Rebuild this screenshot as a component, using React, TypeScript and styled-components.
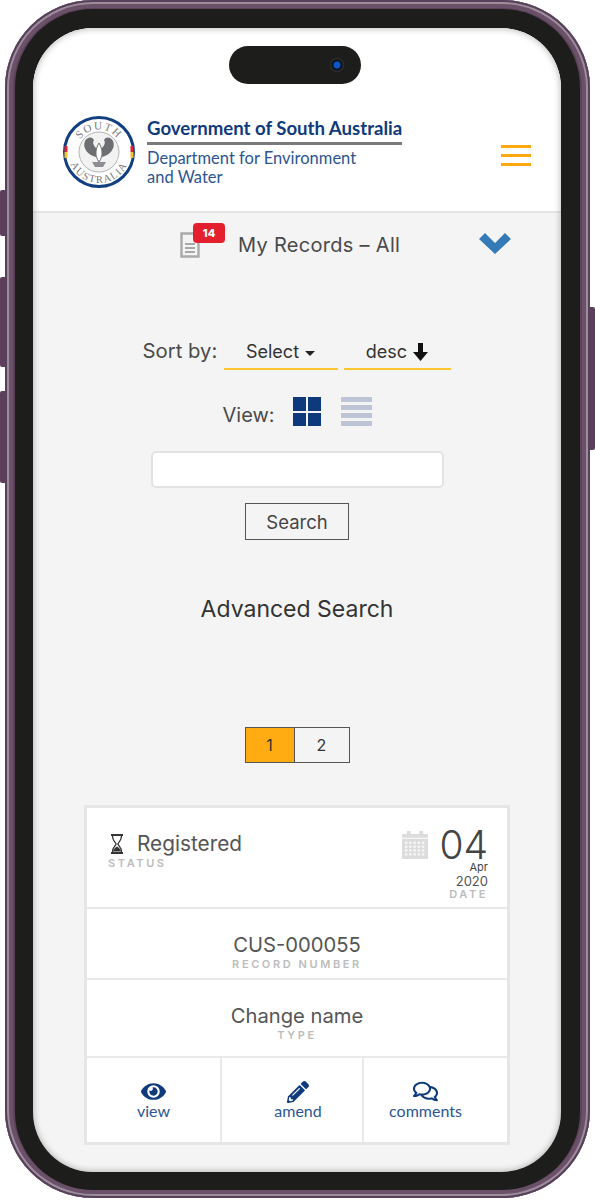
import { createGlobalStyle } from 'styled-components';
import styled from 'styled-components';
import { FaEye, FaPencilAlt, FaRegComments } from 'react-icons/fa';

const GlobalStyle = createGlobalStyle`
  html, body {
    margin: 0;
    padding: 0;
    background: #fff;
  }
  * {
    box-sizing: border-box;
  }
`;

const Page = styled.div`
  width: 595px;
  height: 1200px;
  padding-left: 5px;
  font-family: 'Inter', 'Liberation Sans', sans-serif;
  overflow: hidden;
`;

const Frame = styled.div`
  position: relative;
  width: 585px;
  height: 1198px;
  padding: 9px 10px 8px;
  border-radius: 88px;
  background: #5b4259;
  box-shadow: inset 0 0 0 2px #56405a, inset 0 0 0 4px #9d8d9b, inset 0 0 0 8px #6a5068;
`;

const SideButton = styled.span<{ $side: 'left' | 'right'; $top: number; $height: number }>`
  position: absolute;
  top: ${({ $top }) => $top}px;
  height: ${({ $height }) => $height}px;
  ${({ $side }) => ($side === 'left' ? 'left: -5px;' : 'right: -5px;')}
  width: 5px;
  background: #5c3f5c;
  border-radius: ${({ $side }) => ($side === 'left' ? '2px 0 0 2px' : '0 2px 2px 0')};
`;

const Bezel = styled.div`
  height: 100%;
  padding: 19px 19px 18px 18px;
  border-radius: 78px;
  background: #1d1d1b;
`;

const Screen = styled.div`
  position: relative;
  height: 100%;
  border-radius: 60px;
  overflow: hidden;
  background: #f4f4f4;
  display: flex;
  flex-direction: column;

  &::after {
    content: '';
    position: absolute;
    inset: 0;
    border-radius: 60px;
    box-shadow: inset 0 0 7px rgba(0, 0, 0, 0.32);
    pointer-events: none;
  }
`;

const Island = styled.div`
  position: absolute;
  top: 18px;
  left: 196px;
  width: 132px;
  height: 38px;
  border-radius: 19px;
  background: #1d1d1b;
`;

const Camera = styled.span`
  position: absolute;
  top: 12px;
  right: 17px;
  width: 14px;
  height: 14px;
  border-radius: 50%;
  background: radial-gradient(circle, #0b57c9 0 3px, #10141c 4px 5px, #34363a 7px);
`;

const Header = styled.header`
  height: 185px;
  flex: none;
  background: #fff;
  border-bottom: 2px solid #e6e6e6;
  padding: 87px 30px 0 29px;
  display: flex;
  align-items: flex-start;
`;

const Crest = styled.svg`
  width: 74px;
  height: 74px;
  flex: none;
`;

const Agency = styled.div`
  margin-left: 11px;
  width: 255px;
  font-family: 'Lato', 'Liberation Sans', sans-serif;
  color: #2c5591;
`;

const Government = styled.div`
  font-size: 18.6px;
  line-height: 24px;
  font-weight: 700;
  color: #0f3a7c;
  white-space: nowrap;
  margin-top: 1px;
  padding-bottom: 2px;
  border-bottom: 3px solid #7b7b7d;
`;

const Department = styled.div`
  margin-top: 4px;
  font-size: 16.5px;
  line-height: 19px;
`;

const Burger = styled.div`
  margin-left: auto;
  margin-top: 30px;
  width: 30px;
  display: flex;
  flex-direction: column;
  gap: 6px;
`;

const BurgerLine = styled.span`
  height: 3px;
  background: #ffa90f;
`;

const Content = styled.main`
  flex: 1;
  padding: 0 51px;
  display: flex;
  flex-direction: column;
  align-items: center;
  color: #4a4a4a;
`;

const RecordsBar = styled.div`
  position: relative;
  width: 100%;
  height: 66px;
  display: flex;
  align-items: center;
  padding: 0 0 0 96px;
`;

const RecordIcon = styled.div`
  position: relative;
  align-self: flex-start;
  width: 45px;
  height: 36px;
  margin-top: 10px;
  padding-top: 9px;
`;

const Badge = styled.span`
  position: absolute;
  top: 0;
  left: 13px;
  width: 32px;
  height: 20px;
  border-radius: 4px;
  background: #e5202e;
  color: #fff;
  font-size: 11px;
  font-weight: 800;
  line-height: 20px;
  text-align: center;
`;

const RecordsTitle = styled.span`
  margin-left: 13px;
  margin-top: -3px;
  font-size: 20px;
  letter-spacing: 0.3px;
`;

const Chevron = styled.svg`
  position: absolute;
  top: 20px;
  right: -1px;
  width: 32px;
  height: 21px;
`;

const SortRow = styled.div`
  margin-top: 56px;
  display: flex;
  align-items: flex-start;
  margin-left: -1px;
`;

const SortLabel = styled.span`
  font-size: 20.3px;
  line-height: 24px;
  margin-top: 4px;
  width: 81px;
  white-space: nowrap;
`;

const SortControl = styled.div<{ $width: number }>`
  width: ${({ $width }) => $width}px;
  height: 35px;
  margin-right: 6px;
  border-bottom: 2px solid #fdc731;
  display: flex;
  align-items: center;
  justify-content: center;
  gap: 6px;
  font-size: 18px;
  color: #333;

  &:last-child {
    margin-right: 0;
  }
`;

const Caret = styled.span`
  margin-top: 4px;
  border-left: 5px solid transparent;
  border-right: 5px solid transparent;
  border-top: 5px solid #222;
`;

const ViewRow = styled.div`
  margin-top: 27px;
  display: flex;
  align-items: flex-start;
  height: 30px;
`;

const ViewLabel = styled.span`
  font-size: 20px;
  line-height: 24px;
  width: 70px;
  margin-top: 6px;
`;

const GridIcon = styled.div`
  width: 28px;
  height: 29px;
  display: grid;
  grid-template: 1fr 1fr / 1fr 1fr;
  gap: 2px;
`;

const GridCell = styled.span`
  background: #0e3a7c;
`;

const ListIcon = styled.div`
  margin-left: 20px;
  width: 31px;
  height: 29px;
  display: flex;
  flex-direction: column;
  justify-content: space-between;
`;

const ListBar = styled.span`
  height: 5px;
  background: #bcc4d6;
`;

const SearchInput = styled.input`
  margin-top: 24px;
  width: 293px;
  height: 37px;
  background: #fff;
  border: 2px solid #e3e3e3;
  border-radius: 5px;
  outline: none;
`;

const SearchButton = styled.button`
  margin-top: 15px;
  width: 104px;
  height: 37px;
  background: #f4f4f4;
  border: 1px solid #555;
  color: #444;
  font: inherit;
  font-size: 18.5px;
`;

const AdvancedSearch = styled.div`
  margin-top: 55px;
  font-size: 23px;
  line-height: 28px;
  color: #333;
`;

const Pager = styled.div`
  margin-top: 104px;
  display: flex;
  border: 1px solid #555;
`;

const PageButton = styled.span<{ $active?: boolean }>`
  width: ${({ $active }) => ($active ? 49 : 54)}px;
  height: 34px;
  display: flex;
  align-items: center;
  justify-content: center;
  font-size: 16px;
  color: #333;
  background: ${({ $active }) => ($active ? '#ffab12' : 'transparent')};
  border-right: ${({ $active }) => ($active ? '1px solid #555' : 'none')};
`;

const Card = styled.section`
  margin-top: 42px;
  width: 426px;
  border: 3px solid #e6e6e6;
  background: #fff;
`;

const StatusRow = styled.div`
  height: 101px;
  padding: 23px 19px 0 21px;
  display: flex;
  justify-content: space-between;
  border-bottom: 2px solid #e9e9e9;
`;

const StatusValue = styled.div`
  display: flex;
  align-items: center;
  gap: 13px;
  padding-left: 2px;
  font-size: 20.8px;
  line-height: 26px;
  color: #555;
`;

const Caption = styled.div`
  font-size: 11px;
  line-height: 12px;
  font-weight: 600;
  letter-spacing: 2.6px;
  color: #bcbcbc;
`;

const DateBlock = styled.div`
  display: flex;
  flex-direction: column;
  align-items: flex-end;
  margin-top: -3px;
`;

const DateTop = styled.div`
  display: flex;
  align-items: center;
  gap: 11px;
  height: 33px;
`;

const DateDay = styled.span`
  font-size: 39px;
  font-weight: 300;
  line-height: 33px;
  color: #444;
`;

const DateMonth = styled.span`
  font-size: 11px;
  line-height: 13px;
  color: #444;
`;

const DateYear = styled.span`
  font-size: 13px;
  line-height: 14px;
  color: #555;
`;

const InfoRow = styled.div<{ $height: number }>`
  height: ${({ $height }) => $height}px;
  display: flex;
  flex-direction: column;
  align-items: center;
  border-bottom: 2px solid #e9e9e9;
  padding-top: 23px;
`;

const InfoValue = styled.div`
  font-size: 20.2px;
  line-height: 26px;
  color: #555;
`;

const Actions = styled.div`
  display: grid;
  grid-template-columns: 135px 142px 1fr;
  height: 84px;
`;

const Action = styled.div<{ $nudge: number }>`
  display: flex;
  flex-direction: column;
  align-items: center;
  padding-top: 22px;
  padding-left: ${({ $nudge }) => Math.max($nudge, 0)}px;
  padding-right: ${({ $nudge }) => Math.max(-$nudge, 0)}px;
  color: #0f3a7c;
  border-right: 2px solid #e9e9e9;
  font-family: 'Lato', 'Liberation Sans', sans-serif;

  &:last-child {
    border-right: none;
  }
`;

const ActionIcon = styled.div`
  height: 23px;
  font-size: 23px;
  line-height: 23px;
  display: flex;
  align-items: center;
`;

const ActionLabel = styled.span`
  font-size: 16px;
  line-height: 16px;
  color: #2c5591;
`;

function CrestLogo() {
  return (
    <Crest viewBox="0 0 74 74">
      <defs>
        <path id="arcTop" d="M14.5 37 A22.5 22.5 0 0 1 59.5 37" />
        <path id="arcBottom" d="M6 37 A31 31 0 0 0 68 37" />
      </defs>
      <circle cx="37" cy="37" r="34.5" fill="#fff" stroke="#123f80" strokeWidth="3" />
      <path d="M2.5 31 h3 v6 h-3z" fill="#e5202e" />
      <path d="M2.5 37 h3 v6 h-3z" fill="#f7c22b" />
      <path d="M68.5 31 h3 v6 h-3z" fill="#e5202e" />
      <path d="M68.5 37 h3 v6 h-3z" fill="#f7c22b" />
      <text fontFamily="Liberation Serif, serif" fontSize="11" fill="#77787b" letterSpacing="1.4">
        <textPath href="#arcTop" startOffset="50%" textAnchor="middle">SOUTH</textPath>
      </text>
      <text fontFamily="Liberation Serif, serif" fontSize="10.5" fill="#77787b" letterSpacing="1.4">
        <textPath href="#arcBottom" startOffset="50%" textAnchor="middle">AUSTRALIA</textPath>
      </text>
      <circle cx="37" cy="37" r="20" fill="#f2f2f2" stroke="#b5b5b5" strokeWidth="1" />
      <path d="M34 42 C26 40 20 33 23 26 C25 22 30 21 32 25 C30 28 32 31 35 34z" fill="#6d6e71" />
      <path d="M40 42 C48 40 54 33 51 26 C49 22 44 21 42 25 C44 28 42 31 39 34z" fill="#6d6e71" />
      <path d="M37 28 C40 33 42 40 37 47 C32 40 34 33 37 28z" fill="#fff" stroke="#6d6e71" strokeWidth="1" />
      <path d="M30 47 h14 l-3 5 h-8z" fill="#8d8e91" />
    </Crest>
  );
}

function DocumentIcon() {
  return (
    <svg width="20" height="26" viewBox="0 0 20 26">
      <path d="M1.5 1.5h12l5 5v18h-17z" fill="#f4f4f4" stroke="#a9a9a9" strokeWidth="2.4" />
      <path d="M5 12h10M5 16h10M5 20h10" stroke="#a9a9a9" strokeWidth="1.8" />
    </svg>
  );
}

function HourglassIcon() {
  return (
    <svg width="14" height="20" viewBox="0 0 14 20">
      <path d="M1 0h12v2H1zM1 18h12v2H1z" fill="#333" />
      <path d="M2.5 2c0 5 3 6 3.6 8-.6 2-3.6 3-3.6 8M11.5 2c0 5-3 6-3.6 8 .6 2 3.6 3 3.6 8" fill="none" stroke="#333" strokeWidth="1.3" />
      <path d="M3 17.5c.8-3 2.6-4 4-5 1.4 1 3.2 2 4 5z" fill="#333" />
    </svg>
  );
}

function CalendarIcon() {
  const cells = [0, 1, 2, 3].flatMap(row => [0, 1, 2, 3, 4].map(col => ({ row, col })));
  return (
    <svg width="26" height="28" viewBox="0 0 27 29">
      <rect x="0" y="3" width="27" height="26" rx="1" fill="#dcdcdc" />
      <rect x="5" y="0" width="4" height="5" fill="#dcdcdc" />
      <rect x="18" y="0" width="4" height="5" fill="#dcdcdc" />
      <rect x="0" y="7" width="27" height="1" fill="#fff" />
      {cells.map(({ row, col }) => (
        <rect key={`${row}-${col}`} x={3 + col * 4.4} y={11 + row * 4} width="2.6" height="2.4" fill="#f6f6f6" />
      ))}
    </svg>
  );
}

function HeavyArrowDown() {
  return (
    <svg width="15" height="18" viewBox="0 0 15 18">
      <path d="M5 0h5v9h5l-7.500 9L0 9h5z" fill="#111" />
    </svg>
  );
}

export default function App() {
  return (
    <Page>
      <GlobalStyle />
      <Frame>
        <SideButton $side="left" $top={190} $height={46} />
        <SideButton $side="left" $top={277} $height={90} />
        <SideButton $side="left" $top={391} $height={92} />
        <SideButton $side="right" $top={307} $height={143} />
        <Bezel>
          <Screen>
            <Island>
              <Camera />
            </Island>
            <Header>
              <CrestLogo />
              <Agency>
                <Government>Government of South Australia</Government>
                <Department>
                  Department for Environment
                  <br />
                  and Water
                </Department>
              </Agency>
              <Burger>
                <BurgerLine />
                <BurgerLine />
                <BurgerLine />
              </Burger>
            </Header>
            <Content>
              <RecordsBar>
                <RecordIcon>
                  <DocumentIcon />
                  <Badge>14</Badge>
                </RecordIcon>
                <RecordsTitle>My Records – All</RecordsTitle>
                <Chevron viewBox="0 0 32 21">
                  <path d="M0 6 6 0 16 10 26 0 32 6 16 21z" fill="#337ab7" />
                </Chevron>
              </RecordsBar>
              <SortRow>
                <SortLabel>Sort by:</SortLabel>
                <SortControl $width={114}>
                  Select
                  <Caret />
                </SortControl>
                <SortControl $width={107}>
                  desc
                  <HeavyArrowDown />
                </SortControl>
              </SortRow>
              <ViewRow>
                <ViewLabel>View:</ViewLabel>
                <GridIcon>
                  <GridCell />
                  <GridCell />
                  <GridCell />
                  <GridCell />
                </GridIcon>
                <ListIcon>
                  <ListBar />
                  <ListBar />
                  <ListBar />
                  <ListBar />
                </ListIcon>
              </ViewRow>
              <SearchInput />
              <SearchButton>Search</SearchButton>
              <AdvancedSearch>Advanced Search</AdvancedSearch>
              <Pager>
                <PageButton $active>1</PageButton>
                <PageButton>2</PageButton>
              </Pager>
              <Card>
                <StatusRow>
                  <div>
                    <StatusValue>
                      <HourglassIcon />
                      Registered
                    </StatusValue>
                    <Caption>STATUS</Caption>
                  </div>
                  <DateBlock>
                    <DateTop>
                      <CalendarIcon />
                      <DateDay>04</DateDay>
                    </DateTop>
                    <DateMonth>Apr</DateMonth>
                    <DateYear>2020</DateYear>
                    <Caption>DATE</Caption>
                  </DateBlock>
                </StatusRow>
                <InfoRow $height={71}>
                  <InfoValue>CUS-000055</InfoValue>
                  <Caption>RECORD NUMBER</Caption>
                </InfoRow>
                <InfoRow $height={78}>
                  <InfoValue>Change name</InfoValue>
                  <Caption>TYPE</Caption>
                </InfoRow>
                <Actions>
                  <Action $nudge={0}>
                    <ActionIcon><FaEye size={25} /></ActionIcon>
                    <ActionLabel>view</ActionLabel>
                  </Action>
                  <Action $nudge={12}>
                    <ActionIcon><FaPencilAlt size={22} /></ActionIcon>
                    <ActionLabel>amend</ActionLabel>
                  </Action>
                  <Action $nudge={-20}>
                    <ActionIcon><FaRegComments size={25} /></ActionIcon>
                    <ActionLabel>comments</ActionLabel>
                  </Action>
                </Actions>
              </Card>
            </Content>
          </Screen>
        </Bezel>
      </Frame>
    </Page>
  );
}
